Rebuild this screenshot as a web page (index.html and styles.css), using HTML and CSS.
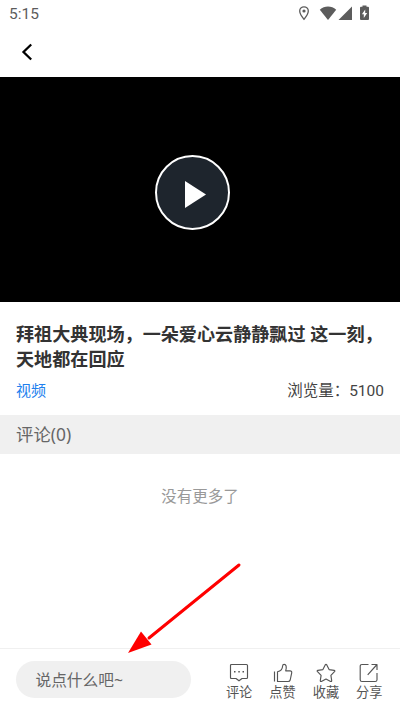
FILE: index.html
```html
<!DOCTYPE html>
<html lang="zh-CN">
<head>
<meta charset="utf-8">
<title>视频</title>
<link rel="stylesheet" href="styles.css">
</head>
<body>
<div class="app">
  <header class="status">
    <span class="clock">5:15</span>
    <svg class="status-icons" width="76" height="20" viewBox="0 0 76 20" fill="#5c5c5c">
      <path d="M6 2.800a4.300 4.300 0 0 0-4.300 4.300C1.700 10.200 6 15.300 6 15.300s4.300-5.100 4.300-8.200A4.300 4.300 0 0 0 6 2.800z" fill="none" stroke="#5c5c5c" stroke-width="1.300"/>
      <circle cx="6" cy="7" r="1.600"/>
      <path d="M21.800 5.700C26.500 1.500 33.500 1.500 38.200 5.700L30 16z"/>
      <path d="M54 2.500V16H40.500z"/>
      <path fill-rule="evenodd" d="M64.500 1.500h4v1.300h1.500q1 0 1 1V15q0 1-1 1h-7q-1 0-1-1V3.800q0-1 1-1h1.500zM67.200 5.500l-3.300 4.700h1.900V14L69.200 9h-2z"/>
    </svg>
  </header>
  <nav class="nav">
    <svg width="12" height="18" viewBox="0 0 12 18" fill="none" stroke="#000" stroke-width="2.300"><path d="M10.200 1.500 2.500 9l7.700 7.500"/></svg>
  </nav>
  <div class="video">
    <div class="play"><svg width="74" height="74" viewBox="0 0 74 74"><path d="M29 25v27L50 38.500z" fill="#fff"/></svg></div>
  </div>
  <section class="info">
    <h1 class="title">拜祖大典现场，一朵爱心云静静飘过 这一刻，<br>天地都在回应</h1>
    <div class="meta"><span class="tag">视频</span><span class="views">浏览量：5100</span></div>
  </section>
  <div class="comments-head">评论(0)</div>
  <main class="empty">没有更多了</main>
  <footer class="bar">
    <div class="input">说点什么吧~</div>
    <div class="actions">
      <div class="action"><svg class="icon" viewBox="0 0 20 20"><path d="M2.500 1.500h15q1 0 1 1v12q0 1-1 1H13l-3 2.300-3-2.300H2.500q-1 0-1-1v-12q0-1 1-1z"/><path class="dots" d="M5 8.700h1.500M9.300 8.700h1.500M13.500 8.700H15"/></svg><span>评论</span></div>
      <div class="action"><svg class="icon" viewBox="0 0 20 20"><path d="M1.500 8.500v10M4.500 8.700v9.800h10.700q1.500 0 2-1.500l1.500-7.200q.3-2-1.700-2h-4.300q.9-3 .4-4.800C12.500.8 9.700.8 9.600 3c-.1 2.700-2 5.200-5.100 5.700z"/></svg><span>点赞</span></div>
      <div class="action"><svg class="icon" viewBox="0 0 20 20"><path d="M9.200 1.900q.8-1.200 1.600 0l2.300 4.700 5 .8q1.300.3.400 1.300l-3.600 3.700.8 5.200q.1 1.300-1.100.8L10 16l-4.600 2.400q-1.200.5-1.100-.8l.8-5.200-3.600-3.700q-.9-1 .4-1.300l5-.8z"/></svg><span>收藏</span></div>
      <div class="action"><svg class="icon" viewBox="0 0 20 20"><path d="M9.500 1.500H3q-1.800 0-1.800 1.800v13.400q0 1.800 1.800 1.800h13.200q1.800 0 1.800-1.800V10M12.500 1.500H18V7M18 1.500 8.700 11.800"/></svg><span>分享</span></div>
    </div>
  </footer>
  <svg class="arrow" width="116" height="94" viewBox="0 0 116 94"><path d="M112 3 22 76" stroke="#f00" stroke-width="3" stroke-linecap="round"/><path d="M1 91 14 69.500 24.500 82.500z" fill="#f00"/></svg>
</div>
</body>
</html>
```

FILE: styles.css
```css
* { box-sizing: border-box; }
body {
  margin: 0;
  background: #fff;
  font-family: "Noto Sans", "Noto Sans CJK SC", sans-serif;
}
.app {
  position: relative;
  display: flex;
  flex-direction: column;
  height: 710px;
  overflow: hidden;
}
.status {
  display: flex;
  justify-content: space-between;
  height: 28px;
  padding: 4px 28px 0 9px;
}
.clock { font-family: Roboto, sans-serif; font-size: 15.500px; line-height: 20px; color: #5c5c5c; }
.status-icons { margin-right: -2px; }
.nav { height: 49px; padding: 15px 0 0 21px; }
.nav svg { display: block; }
.video {
  display: flex;
  height: 225px;
  padding: 78px 0 0 155px;
  background: #000;
}
.play {
  width: 75px;
  height: 75px;
  border: 2px solid #fff;
  border-radius: 50%;
  background: #1e252d;
}
.play svg { display: block; margin: -1px 0 0 -1px; }
.info { height: 113px; padding: 20px 16px 0; }
.title {
  margin: 0;
  font-size: 18.100px;
  line-height: 25px;
  font-weight: 700;
  color: #333;
  white-space: nowrap;
}
.meta {
  display: flex;
  justify-content: space-between;
  margin-top: 7px;
  font-size: 15.500px;
  line-height: 22px;
  color: #444;
}
.views {
  font-family: Roboto, "Noto Sans CJK SC", sans-serif;
  font-size: 15.500px;
  line-height: 24px;
}
.tag { color: #2080ee; font-size: 15px; }
.comments-head {
  height: 39px;
  padding-left: 16px;
  font-size: 17.400px;
  line-height: 38px;
  color: #666;
  background: #f0f0f0;
}
.empty {
  flex: 1;
  padding-top: 31px;
  font-size: 15.500px;
  line-height: 22px;
  text-align: center;
  color: #999;
}
.bar {
  display: flex;
  justify-content: space-between;
  height: 62px;
  padding: 12px 9px 0 16px;
  border-top: 1px solid #f0f0f0;
}
.input {
  width: 175px;
  height: 37px;
  padding-left: 19.500px;
  border-radius: 19px;
  font-size: 15.700px;
  line-height: 38px;
  color: #666;
  background: #f0f0f0;
}
.actions { display: flex; }
.action {
  display: flex;
  flex-direction: column;
  align-items: center;
  width: 43.400px;
  padding-top: 2px;
  font-size: 13.200px;
  line-height: 19px;
  color: #555;
}
.icon {
  width: 20px;
  height: 20px;
  fill: none;
  stroke: #555;
  stroke-width: 1.150;
  stroke-linejoin: round;
}
.dots { stroke-width: 1.500; }
.arrow { position: absolute; left: 127px; top: 562px; }
```
